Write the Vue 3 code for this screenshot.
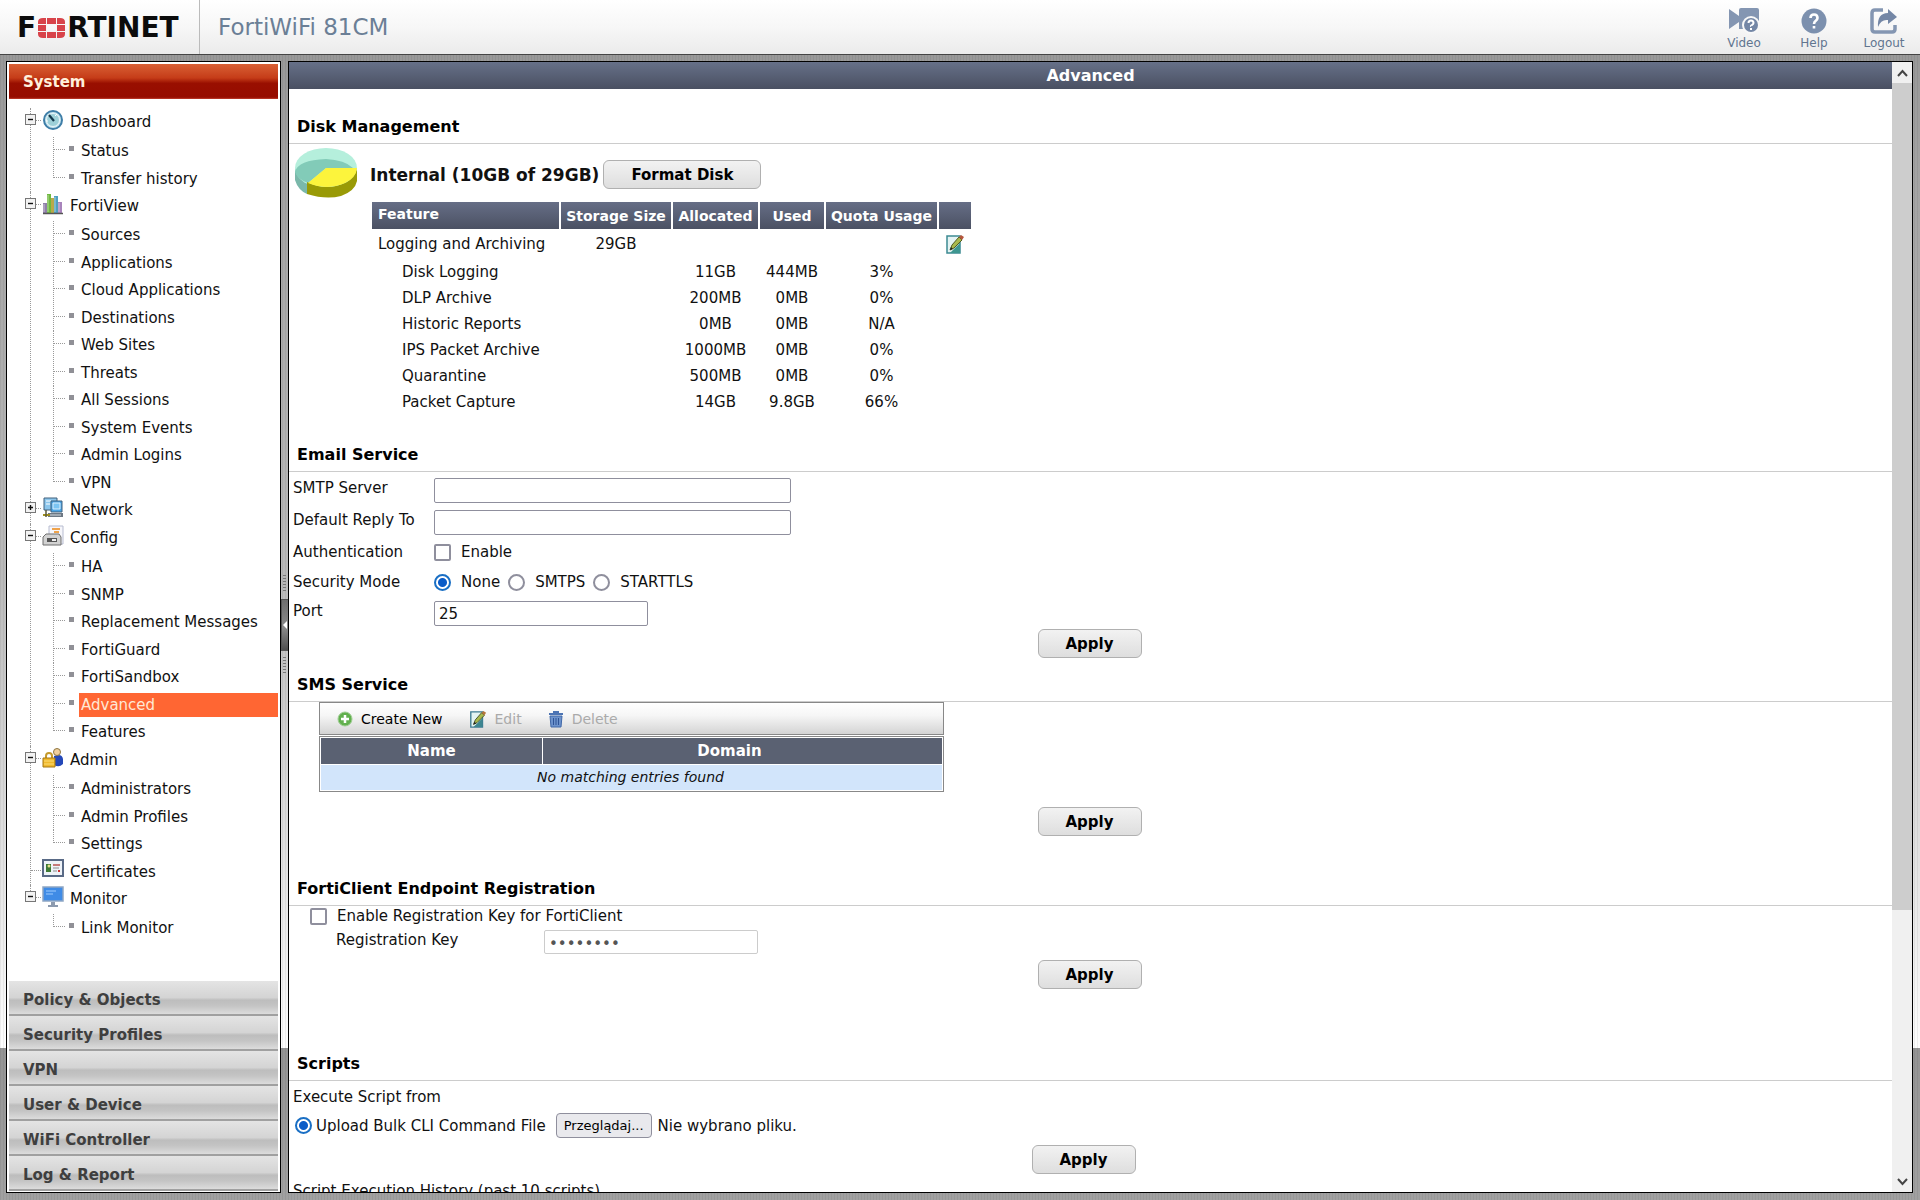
<script setup>
import { ref } from 'vue'

const tree = [
  { name: 'Dashboard', icon: 'dashboard', items: ['Status', 'Transfer history'] },
  {
    name: 'FortiView',
    icon: 'fortiview',
    items: ['Sources', 'Applications', 'Cloud Applications', 'Destinations', 'Web Sites', 'Threats', 'All Sessions', 'System Events', 'Admin Logins', 'VPN']
  },
  { name: 'Network', icon: 'network', collapsed: true },
  {
    name: 'Config',
    icon: 'config',
    items: ['HA', 'SNMP', 'Replacement Messages', 'FortiGuard', 'FortiSandbox', 'Advanced', 'Features']
  },
  { name: 'Admin', icon: 'admin', items: ['Administrators', 'Admin Profiles', 'Settings'] },
  { name: 'Certificates', icon: 'certificates' },
  { name: 'Monitor', icon: 'monitor', items: ['Link Monitor'] }
]
const selected = ref('Advanced')
const menus = ['Policy & Objects', 'Security Profiles', 'VPN', 'User & Device', 'WiFi Controller', 'Log & Report']

const disk = [
  ['Disk Logging', '11GB', '444MB', '3%'],
  ['DLP Archive', '200MB', '0MB', '0%'],
  ['Historic Reports', '0MB', '0MB', 'N/A'],
  ['IPS Packet Archive', '1000MB', '0MB', '0%'],
  ['Quarantine', '500MB', '0MB', '0%'],
  ['Packet Capture', '14GB', '9.8GB', '66%']
]

const smtp = ref('')
const replyTo = ref('')
const auth = ref(false)
const security = ref('None')
const port = ref('25')
const useKey = ref(false)
const source = ref('upload')
</script>

<template>
  <div class="page">
    <header class="top">
      <div class="logo" aria-label="Fortinet">
        <span>F</span>
        <svg width="27" height="20" viewBox="0 0 27 20" aria-hidden="true">
          <g fill="#d8434a">
            <path d="M0 6V4Q0 0 5 0H8V6ZM9 0H18V6H9ZM19 0H22Q27 0 27 4V6H19ZM0 7H8V13H0ZM19 7H27V13H19ZM0 14H8V20H5Q0 20 0 16ZM9 14H18V20H9ZM19 14H27V16Q27 20 22 20H19Z" />
          </g>
        </svg>
        <span>RTINET</span>
      </div>
      <h1>FortiWiFi 81CM</h1>
      <nav class="tools">
        <a href="#video">
          <svg width="32" height="26" viewBox="0 0 32 26" aria-hidden="true">
            <path d="M1 1L11 8V2Q11 0 13 0H29Q31 0 31 2V21H11V14L1 21Z" fill="#8496b2" />
            <circle cx="23" cy="17" r="9" fill="#f8f8f8" />
            <circle cx="23" cy="17" r="7" fill="#7487a6" />
            <path d="M20.500 15Q20.500 12.500 23 12.500T25.500 15Q25.500 16 24 17T23 18.500M23 20V22" fill="none" stroke="#fff" stroke-width="2" />
          </svg>
          <span>Video</span>
        </a>
        <a href="#help">
          <svg width="26" height="26" viewBox="0 0 26 26" aria-hidden="true">
            <circle cx="13" cy="13" r="12.500" fill="#7c90ae" />
            <path d="M9.500 10Q9.500 6.500 13 6.500T16.500 10Q16.500 11.500 14.800 12.800T13 16M13 18V20.500" fill="none" stroke="#fff" stroke-width="2.600" />
          </svg>
          <span>Help</span>
        </a>
        <a href="#logout">
          <svg width="28" height="26" viewBox="0 0 28 26" aria-hidden="true">
            <path d="M13 2H5Q2 2 2 5V21Q2 24 5 24H22Q25 24 25 21V17" fill="none" stroke="#8496b2" stroke-width="3.500" />
            <path d="M8 19Q7 5 18 5V1L27 9L18 16V12Q11 11 8 19Z" fill="#7487a6" />
          </svg>
          <span>Logout</span>
        </a>
      </nav>
    </header>

    <div class="body">
      <aside class="side">
        <h2 class="side-head">System</h2>
        <ul class="tree">
          <li v-for="g in tree" :key="g.name" class="group">
            <div class="parent" :class="{ short: !g.items && !g.collapsed }">
              <button v-if="g.items || g.collapsed" class="toggle" type="button" :aria-label="'Toggle ' + g.name">
                <svg width="11" height="11" viewBox="0 0 11 11">
                  <rect x=".5" y=".5" width="10" height="10" fill="#f2f2f2" stroke="#777" />
                  <path :d="g.collapsed ? 'M3 5.500H8M5.500 3V8' : 'M3 5.500H8'" stroke="#111" stroke-width="1.400" />
                </svg>
              </button>
              <svg class="icon" width="22" height="22" viewBox="0 0 22 22" aria-hidden="true">
                <template v-if="g.icon === 'dashboard'">
                  <circle cx="11" cy="11" r="9" fill="#c9e6ee" stroke="#3e7ea8" stroke-width="2" />
                  <circle cx="11" cy="11" r="6.500" fill="#9dd0d8" stroke="#e9f6fa" />
                  <path d="M7 6L12 12" stroke="#14384c" stroke-width="2.200" />
                  <path d="M13 7L15 5M6 12H4" stroke="#fff" />
                </template>
                <template v-else-if="g.icon === 'fortiview'">
                  <path d="M1 10H5V20H1Z" fill="#8f7fa8" />
                  <path d="M5 1H9V20H5Z" fill="#6fb83f" />
                  <path d="M9 5H12V20H9Z" fill="#b9a94a" />
                  <path d="M12 3H16V20H12Z" fill="#4fa0c0" />
                  <path d="M16 9H20V20H16Z" fill="#a884bc" />
                  <path d="M6 2V19M13 4V19M17 10V19M2 11V19" stroke="#fff" stroke-opacity=".5" />
                  <path d="M1 20.500H21" stroke="#555" stroke-width="1.500" />
                </template>
                <template v-else-if="g.icon === 'network'">
                  <path d="M2 1H15V13H2Z" fill="#8cc6ec" stroke="#41617c" />
                  <path d="M4 4H9M4 7H8" stroke="#fff" />
                  <path d="M9 4H20V15H9Z" fill="#4aa6e8" stroke="#41617c" />
                  <path d="M11 6H18V12H11Z" fill="#7cc4f2" stroke="#dceefa" />
                  <path d="M6 16H21V20H6Z" fill="#6d7884" />
                  <path d="M8 18H19" stroke="#d5dbe0" />
                  <path d="M1 18H8" stroke="#a08f1c" stroke-width="2" />
                  <path d="M4 13V20" stroke="#5a5a3c" stroke-width="1.500" />
                </template>
                <template v-else-if="g.icon === 'config'">
                  <path d="M7 1H21V19H7Z" fill="#f6f6fa" stroke="#b7bcd0" />
                  <path d="M10 4H18M12 7H17" stroke="#efa34b" stroke-width="2" />
                  <path d="M1 12L4 9H17L19 12V20H1Z" fill="#d2d2d2" stroke="#6e6e6e" />
                  <path d="M5 13H15V17H5Z" fill="#555" />
                  <path d="M10 14H14V16H10Z" fill="#eee" />
                </template>
                <template v-else-if="g.icon === 'admin'">
                  <path d="M12 9Q20 6 21 12V17Q17 21 12 18Z" fill="#2448b8" />
                  <circle cx="15" cy="5" r="3.500" fill="#f0cf9c" stroke="#8d7440" />
                  <path d="M4 11V9Q4 6 7 6T10 9V11" fill="none" stroke="#c49a2c" stroke-width="2" />
                  <path d="M1 11H13V20H1Z" fill="#f0b92c" stroke="#a47712" />
                  <path d="M2 14H12M2 17H12" stroke="#fbdc79" />
                </template>
                <template v-else-if="g.icon === 'certificates'">
                  <path d="M1 2H21V18H1Z" fill="#eef3f8" stroke="#596a86" stroke-width="2" />
                  <path d="M4 6H9V14H4Z" fill="#3e7a34" />
                  <circle cx="7" cy="8" r="1.500" fill="#e4e08c" />
                  <path d="M11 7H18" stroke="#b9504e" stroke-width="1.500" />
                  <path d="M11 10H17M11 13H15" stroke="#8d8d8d" />
                  <path d="M16 13H18" stroke="#c33" stroke-width="2" />
                </template>
                <template v-else>
                  <path d="M1 1H21V15H1Z" fill="#3f8be6" stroke="#8fa6c4" stroke-width="1.500" />
                  <path d="M4 5H14M4 8H11" stroke="#7fb6f6" stroke-width="1.500" />
                  <path d="M9 16H13V19H16V21H6V19H9Z" fill="#8c9aae" />
                </template>
              </svg>
              <a :href="'#' + g.icon">{{ g.name }}</a>
            </div>
            <ul v-if="g.items" class="leaves">
              <li v-for="item in g.items" :key="item">
                <a href="#page" :class="{ on: selected === item }" @click.prevent="selected = item">{{ item }}</a>
              </li>
            </ul>
          </li>
        </ul>
        <nav class="menus">
          <a v-for="m in menus" :key="m" href="#menu">{{ m }}</a>
        </nav>
      </aside>

      <div class="split">
        <i class="grip"></i>
        <button type="button" aria-label="Collapse menu">
          <svg width="4" height="8" viewBox="0 0 4 8"><path d="M4 0V8L0 4Z" fill="#fff" /></svg>
        </button>
        <i class="grip"></i>
      </div>

      <main class="main">
        <div class="content">
          <h2 class="bar">Advanced</h2>

          <section class="disk">
            <h3>Disk Management</h3>
            <div class="disk-body">
              <svg class="pie" width="62" height="51" viewBox="0 0 62 51" aria-hidden="true">
                <path d="M0 20V32Q3 42 12 46V34Z" fill="#7ab8aa" />
                <ellipse cx="31" cy="20" rx="31" ry="20" fill="#b5efdc" />
                <path d="M0 24Q3 12 31 11Q50 12 58 20L31 20L13 35Q2 31 0 24Z" fill="#82cbb8" />
                <path d="M12 34Q32 44 52 34Q60 29 62 21V33Q60 43 46 48Q31 52 12 46Z" fill="#999a06" />
                <path d="M31 20H62Q61 30 50 35Q32 43 13 35Z" fill="#fcf43c" />
              </svg>
              <div>
                <div class="disk-title">
                  <strong>Internal (10GB of 29GB)</strong>
                  <button class="btn wide" type="button">Format Disk</button>
                </div>
                <table class="quota">
                  <colgroup>
                    <col class="c1" /><col class="c2" /><col class="c3" /><col class="c4" /><col class="c5" /><col class="c6" />
                  </colgroup>
                  <thead>
                    <tr>
                      <th>Feature</th><th>Storage Size</th><th>Allocated</th><th>Used</th><th>Quota Usage</th><th></th>
                    </tr>
                  </thead>
                  <tbody>
                    <tr class="total">
                      <td>Logging and Archiving</td><td>29GB</td><td></td><td></td><td></td>
                      <td>
                        <button class="plain" type="button" aria-label="Edit">
                          <svg width="20" height="20" viewBox="0 0 20 20">
                            <path d="M2 2H15V19H2Z" fill="#e4f3f3" stroke="#3c8a92" stroke-width="1.500" />
                            <path d="M5 19L15 9V19Z" fill="#3d9690" />
                            <path d="M5 16L7 11L14 3L17 6L9 14Z" fill="#a9b94d" stroke="#525c22" />
                            <path d="M14 3L16 1L19 3L17 6Z" fill="#b5563c" />
                            <path d="M5 16L6 13L8 15Z" fill="#222" />
                          </svg>
                        </button>
                      </td>
                    </tr>
                    <tr v-for="r in disk" :key="r[0]">
                      <td class="sub">{{ r[0] }}</td><td></td><td>{{ r[1] }}</td><td>{{ r[2] }}</td><td>{{ r[3] }}</td><td></td>
                    </tr>
                  </tbody>
                </table>
              </div>
            </div>
          </section>

          <section class="email">
            <h3>Email Service</h3>
            <form @submit.prevent>
              <div class="row"><label for="smtp">SMTP Server</label><input id="smtp" v-model="smtp" class="long" type="text" /></div>
              <div class="row"><label for="reply">Default Reply To</label><input id="reply" v-model="replyTo" class="long" type="text" /></div>
              <div class="row opt">
                <span>Authentication</span>
                <label class="choice"><input v-model="auth" type="checkbox" />Enable</label>
              </div>
              <div class="row opt">
                <span>Security Mode</span>
                <label v-for="m in ['None', 'SMTPS', 'STARTTLS']" :key="m" class="choice"><input v-model="security" type="radio" name="security" :value="m" />{{ m }}</label>
              </div>
              <div class="row last"><label for="port">Port</label><input id="port" v-model="port" type="text" /></div>
              <div class="apply"><button class="btn" type="submit">Apply</button></div>
            </form>
          </section>

          <section class="sms">
            <h3>SMS Service</h3>
            <div class="grid">
              <div class="toolbar">
                <button type="button">
                  <svg width="16" height="16" viewBox="0 0 16 16" aria-hidden="true">
                    <circle cx="8" cy="8" r="7" fill="#62b04e" stroke="#9fce93" />
                    <path d="M8 4V12M4 8H12" stroke="#fff" stroke-width="2.500" />
                  </svg>Create New
                </button>
                <button type="button" disabled>
                  <svg width="18" height="18" viewBox="0 0 20 20" aria-hidden="true">
                    <path d="M2 2H15V19H2Z" fill="#e4f3f3" stroke="#3c7a92" stroke-width="1.500" />
                    <path d="M5 19L15 9V19Z" fill="#3d8690" />
                    <path d="M5 16L7 11L14 3L17 6L9 14Z" fill="#a9b94d" stroke="#424c22" />
                    <path d="M14 3L16 1L19 3L17 6Z" fill="#b5763c" />
                    <path d="M5 16L6 13L8 15Z" fill="#222" />
                  </svg>Edit
                </button>
                <button type="button" disabled>
                  <svg width="16" height="18" viewBox="0 0 16 18" aria-hidden="true">
                    <path d="M1 3H15V5H1ZM5 1H11V3H5Z" fill="#4c74b4" />
                    <path d="M2 6H14L13 17H3Z" fill="#6c92cc" stroke="#4068a8" />
                    <path d="M5.500 8V15M8 8V15M10.500 8V15" stroke="#2f5496" />
                  </svg>Delete
                </button>
              </div>
              <table class="list">
                <thead><tr><th class="name">Name</th><th class="domain">Domain</th></tr></thead>
                <tbody><tr><td colspan="2">No matching entries found</td></tr></tbody>
              </table>
            </div>
            <div class="apply"><button class="btn" type="button">Apply</button></div>
          </section>

          <section class="client">
            <h3>FortiClient Endpoint Registration</h3>
            <label class="choice enable"><input v-model="useKey" type="checkbox" />Enable Registration Key for FortiClient</label>
            <div class="key">
              <label for="key">Registration Key</label>
              <input id="key" type="password" value="password" :disabled="!useKey" />
            </div>
            <div class="apply"><button class="btn" type="button">Apply</button></div>
          </section>

          <section class="scripts">
            <h3>Scripts</h3>
            <p>Execute Script from</p>
            <div class="upload">
              <label class="choice"><input v-model="source" type="radio" name="source" value="upload" />Upload Bulk CLI Command File</label>
              <label class="file"><input type="file" />Przeglądaj...</label>
              <span>Nie wybrano pliku.</span>
            </div>
            <div class="apply"><button class="btn" type="button">Apply</button></div>
            <p>Script Execution History (past 10 scripts)</p>
          </section>
        </div>

        <div class="scroll">
          <button type="button" aria-label="Scroll up">
            <svg width="11" height="8" viewBox="0 0 11 8"><path d="M1 7L5.500 2L10 7" fill="none" stroke="#444" stroke-width="2" /></svg>
          </button>
          <div class="track"><div class="thumb"></div></div>
          <button type="button" aria-label="Scroll down">
            <svg width="11" height="8" viewBox="0 0 11 8"><path d="M1 1L5.500 6L10 1" fill="none" stroke="#444" stroke-width="2" /></svg>
          </button>
        </div>
      </main>
    </div>
  </div>
</template>

<style>
body {
  margin: 0;
}
</style>

<style scoped>
* {
  box-sizing: border-box;
}
.page {
  height: 100vh;
  display: flex;
  flex-direction: column;
  overflow: hidden;
  font-family: Verdana, "DejaVu Sans", sans-serif;
  font-size: 15px;
  line-height: 20px;
  color: #111;
  background:
    repeating-linear-gradient(90deg, rgba(0, 0, 0, 0.06) 0 1px, transparent 1px 3px),
    linear-gradient(#949494, #a4a4a4 18%, #bababa 55%, #fdfdfd) 0 0 / 100% 1048px;
}
h1, h2, h3, p, ul {
  margin: 0;
  padding: 0;
}
ul {
  list-style: none;
}
a {
  color: inherit;
  text-decoration: none;
}
button {
  font: inherit;
  color: inherit;
}

/* header */
.top {
  flex: none;
  height: 55px;
  display: flex;
  align-items: stretch;
  background: linear-gradient(#fff, #f7f7f7 50%, #ebebeb);
  border-bottom: 1px solid #444;
}
.logo {
  width: 200px;
  padding: 2px 0 0 17px;
  display: flex;
  align-items: center;
  gap: 2px;
  border-right: 1px solid #bbb;
  font-size: 28px;
  line-height: 54px;
  font-weight: bold;
  color: #0c0c0c;
}
h1 {
  flex: 1;
  padding-left: 18px;
  font-size: 23px;
  line-height: 55px;
  font-weight: normal;
  color: #6b7f96;
}
.tools {
  display: flex;
  padding: 8px 1px 0 0;
}
.tools a {
  width: 70px;
  display: flex;
  flex-direction: column;
  align-items: center;
  gap: 2px;
  font-size: 12px;
  line-height: 15px;
  color: #61758f;
}

/* body */
.body {
  flex: 1;
  min-height: 0;
  display: flex;
  padding: 6px 7px 7px 6px;
}
.side {
  width: 275px;
  flex: none;
  display: flex;
  flex-direction: column;
  padding: 2px 2px 1px;
  background: #fff;
  border: 1px solid #000;
}
.side-head {
  height: 35px;
  padding-left: 14px;
  font-size: 15px;
  line-height: 37px;
  color: #fff0dc;
  background: linear-gradient(#d96035, #c53c18 40%, #990f00 55%, #960c00 95%, #c04030);
}
.tree {
  flex: 1;
  padding-top: 9px;
}
.group {
  position: relative;
}
.group::before {
  content: "";
  position: absolute;
  left: 21px;
  top: 0;
  bottom: 0;
  border-left: 1px dotted #999;
}
.group:last-child::before {
  bottom: auto;
  height: 10px;
}
.parent {
  position: relative;
  height: 28px;
  display: flex;
  align-items: center;
  padding-left: 33px;
}
.parent.short {
  height: 27px;
}
.parent::before {
  content: "";
  position: absolute;
  left: 22px;
  top: 12px;
  width: 10px;
  border-top: 1px dotted #999;
}
.parent a {
  padding-left: 6px;
  line-height: 28px;
}
.icon {
  margin-bottom: 5px;
}
.toggle {
  position: absolute;
  left: 16px;
  top: 6px;
  width: 11px;
  height: 11px;
  padding: 0;
  border: 0;
  line-height: 0;
  background: none;
}
.leaves {
  margin-top: 1px;
}
.leaves li {
  position: relative;
  height: 28px;
  padding: 2px 0 0 70px;
}
.leaves li:nth-child(even) {
  height: 27px;
}
.leaves li::before {
  content: "";
  position: absolute;
  left: 44px;
  top: 0;
  width: 11px;
  height: 12px;
  border-left: 1px dotted #999;
  border-bottom: 1px dotted #999;
}
.leaves li:not(:last-child) {
  background: repeating-linear-gradient(#999 0 1px, transparent 1px 2px) 44px 0 / 1px 100% no-repeat;
}
.leaves li::after {
  content: "";
  position: absolute;
  left: 60px;
  top: 9px;
  width: 5px;
  height: 5px;
  background: #909096;
}
.leaves a {
  display: block;
  padding-left: 2px;
  line-height: 24px;
}
.leaves a.on {
  color: #ffe8d4;
  background: #ff6633;
}
.menus a {
  display: block;
  height: 35px;
  padding-left: 14px;
  font-weight: bold;
  line-height: 38px;
  color: #3f3f3f;
  background: linear-gradient(#e4e4e4, #d4d4d4 50%, #bdbdbd 58%, #c4c4c4 75%, #dcdcdc);
  border-bottom: 2px solid #a0a0a0;
}

.split {
  width: 7px;
  flex: none;
  display: flex;
  flex-direction: column;
  align-items: center;
  justify-content: center;
  gap: 6px;
  padding-bottom: 4px;
}
.split button {
  width: 7px;
  height: 52px;
  display: flex;
  align-items: center;
  justify-content: center;
  padding: 0;
  border: 1px solid #555;
  border-right: 0;
  background: linear-gradient(#6e6e6e, #8a8a8a 55%, #505050);
}
.grip {
  width: 3px;
  height: 18px;
  background: repeating-linear-gradient(#777 0 1px, transparent 1px 3px);
}

.main {
  flex: 1;
  min-width: 0;
  display: flex;
  border: 1px solid #000;
  background: #fff;
}
.content {
  flex: 1;
  min-width: 0;
  overflow: hidden;
}
.bar {
  height: 27px;
  font-size: 16px;
  line-height: 28px;
  text-align: center;
  color: #fff;
  background: linear-gradient(#667088, #4a5062);
}
h3 {
  height: 30px;
  padding-left: 8px;
  font-size: 16px;
  line-height: 26px;
  color: #000;
  border-bottom: 1px solid #ccc;
}

.btn {
  display: block;
  width: 104px;
  height: 29px;
  padding: 2px 0 0;
  font-weight: bold;
  line-height: 25px;
  color: #000;
  background: linear-gradient(#f2f2f2, #dedede);
  border: 1px solid #b0b0b0;
  border-radius: 6px;
}
.btn.wide {
  width: 158px;
}
.apply {
  display: flex;
  justify-content: center;
  padding-right: 2px;
}

/* disk */
.disk {
  padding-top: 25px;
}
.disk-body {
  display: flex;
  gap: 13px;
  padding: 4px 0 28px 6px;
}
.disk-title {
  display: flex;
  align-items: center;
  gap: 4px;
  padding: 12px 0 13px;
  font-size: 17px;
}
.disk-title .btn {
  font-size: 15px;
}
table {
  border-collapse: collapse;
  table-layout: fixed;
}
.quota {
  width: 600px;
  margin-left: 2px;
}
.c1 { width: 188px; }
.c2 { width: 112px; }
.c3 { width: 87px; }
.c4 { width: 66px; }
.c5 { width: 113px; }
.c6 { width: 34px; }
.quota th {
  height: 27px;
  padding: 0;
  font-size: 14px;
  color: #fff;
  background: linear-gradient(#666e86, #4b5163);
  background-clip: padding-box;
  border-right: 2px solid #fff;
}
.quota th:first-child {
  padding: 0 0 3px 6px;
  text-align: left;
}
.quota td {
  height: 26px;
  padding: 1px 0 0;
  text-align: center;
}
.quota td:first-child {
  padding-left: 6px;
  text-align: left;
}
.quota td.sub:first-child {
  padding-left: 30px;
}
.quota .total td {
  height: 29px;
}
.plain {
  display: block;
  margin: 0 auto;
  padding: 0;
  border: 0;
  line-height: 0;
  background: none;
}

/* forms */
input[type="text"],
input[type="password"] {
  width: 214px;
  height: 25px;
  padding: 0 4px;
  font: inherit;
  color: inherit;
  background: #fff;
  border: 1px solid #8f8f9d;
  border-radius: 2px;
}
input[type="text"].long {
  width: 357px;
}
input[type="password"]:disabled {
  color: #555;
  border-color: #ccc;
}
input[type="checkbox"],
input[type="radio"] {
  appearance: none;
  flex: none;
  width: 17px;
  height: 17px;
  margin: 0;
  background: #fff;
  border: 2px solid #8f8f9d;
  border-radius: 2px;
}
input[type="radio"] {
  border-radius: 50%;
}
input[type="checkbox"]:checked {
  background: #0060df;
}
input[type="radio"]:checked {
  border-color: #1a6fc4;
  background: radial-gradient(circle, #0a5cc8 4px, #fff 5px);
}
.choice {
  display: flex;
  align-items: center;
  gap: 10px;
}
.email form {
  padding-top: 6px;
}
.row {
  height: 32px;
  display: flex;
  align-items: flex-start;
  gap: 8px;
  padding-left: 4px;
}
.row > :first-child {
  width: 133px;
}
.row.opt {
  height: 30px;
}
.row.opt + .row.last {
  height: 28px;
}
.row.opt + .row.opt {
  height: 29px;
}

.sms {
  padding-top: 14px;
}
.grid {
  width: 625px;
  margin: 0 0 15px 30px;
}
.toolbar {
  height: 33px;
  display: flex;
  gap: 25px;
  padding-left: 16px;
  margin-bottom: 1px;
  background: linear-gradient(#fff, #f6f6f6 40%, #d4d4d4);
  border: 1px solid #888;
}
.toolbar button {
  display: flex;
  align-items: center;
  gap: 8px;
  padding: 1px 0 0 1px;
  border: 0;
  font-size: 14px;
  color: #000;
  background: none;
}
.toolbar button:disabled {
  color: #aaa;
}
.list {
  width: 100%;
  border-collapse: separate;
  border-spacing: 1px;
  border: 1px solid #888;
}
.list th {
  height: 26px;
  padding: 0;
  color: #fff;
  background: #5a6172;
}
.list .name {
  width: 221px;
}
.list .domain {
  padding-right: 26px;
}
.list td {
  height: 25px;
  padding: 0 2px 2px 0;
  font-size: 14px;
  font-style: italic;
  text-align: center;
  background: #d2e5fb;
}

.client {
  padding-top: 40px;
}
.enable {
  width: max-content;
  padding-left: 21px;
}
.key {
  height: 34px;
  display: flex;
  gap: 8px;
  padding: 4px 0 0 47px;
}
.key label {
  width: 200px;
}
.key input[type="password"] {
  height: 24px;
  padding-top: 3px;
}

.scripts {
  padding-top: 62px;
}
.scripts p {
  padding: 6px 0 6px 4px;
}
.scripts .apply {
  padding: 7px 14px 1px 0;
}
.upload {
  height: 25px;
  display: flex;
  align-items: center;
  gap: 6px;
  padding-left: 6px;
}
.upload .choice {
  gap: 4px;
  padding-right: 4px;
}
.file {
  height: 25px;
  padding: 0 7px;
  font-size: 13px;
  line-height: 23px;
  color: #000;
  background: #e9e9ed;
  border: 1px solid #8f8f9d;
  border-radius: 4px;
}
.file input {
  display: none;
}

.scroll {
  width: 20px;
  flex: none;
  display: flex;
  flex-direction: column;
  background: #f0f0f0;
}
.scroll button {
  height: 21px;
  display: flex;
  align-items: center;
  justify-content: center;
  padding: 0;
  border: 0;
  background: none;
}
.track {
  flex: 1;
}
.thumb {
  height: 76%;
  background: #cdcdcd;
}
</style>
